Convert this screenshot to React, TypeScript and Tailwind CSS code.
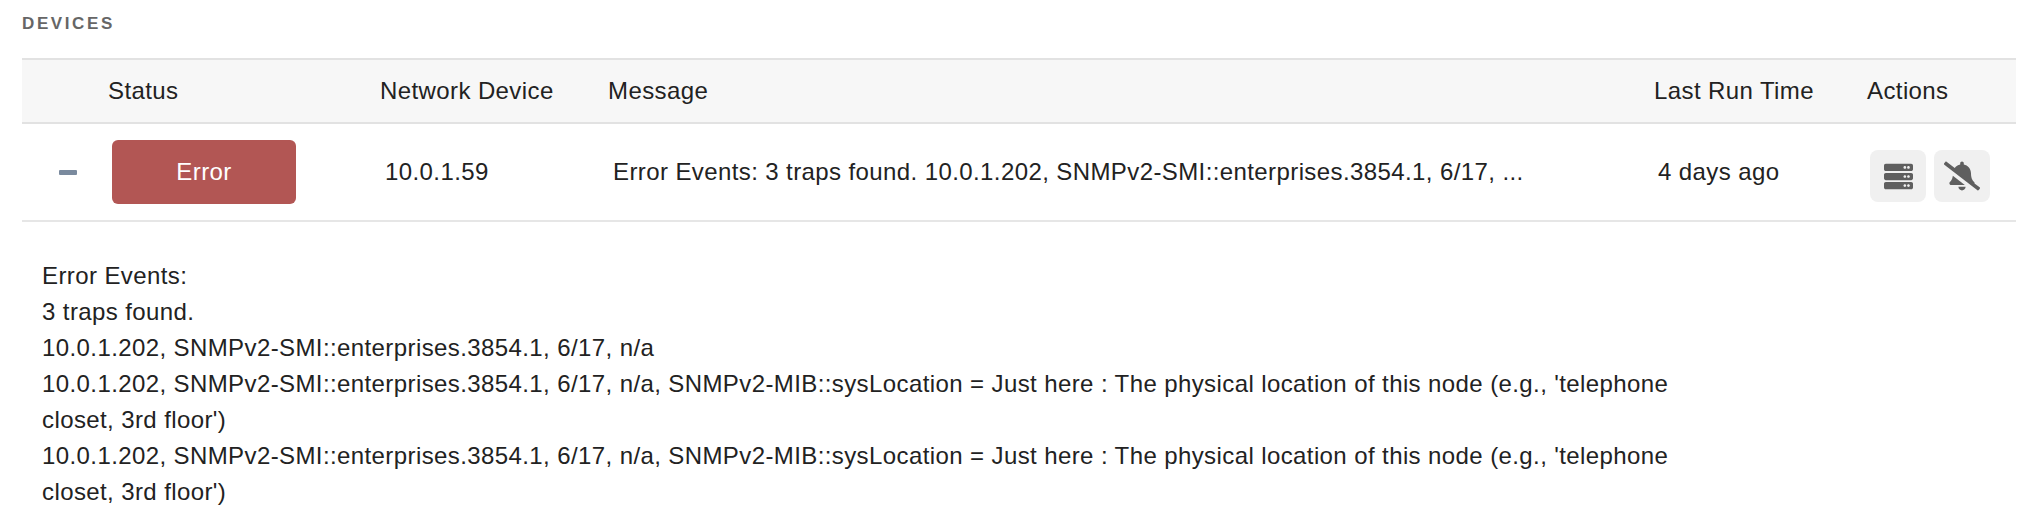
import { FaBellSlash, FaServer } from "react-icons/fa";

const font = "font-['Liberation_Sans',Arial,sans-serif]";

const DETAIL =
  "10.0.1.202, SNMPv2-SMI::enterprises.3854.1, 6/17, n/a, SNMPv2-MIB::sysLocation = Just here : The physical location of this node (e.g., 'telephone closet, 3rd floor')";

export default function App() {
  return (
    <div className={`${font} h-[528px] w-[2034px] bg-white pl-[22px] text-[24px] tracking-[0.4px] text-[#222]`}>
      <h2 className="pt-[16px] text-[17px] leading-[16px] font-bold tracking-[2.6px] text-[#666]">DEVICES</h2>

      {/* Table header */}
      <div className="mt-[26px] flex h-[66px] w-[1994px] items-center border-y-2 border-[#e2e2e2] bg-[#f7f7f7]">
        <div className="w-[86px]" />
        <div className="w-[272px]">Status</div>
        <div className="w-[228px]">Network Device</div>
        <div className="w-[1046px]">Message</div>
        <div className="w-[213px]">Last Run Time</div>
        <div>Actions</div>
      </div>

      {/* Device row */}
      <div className="flex h-[98px] w-[1994px] items-center border-b-2 border-[#e6e6e6]">
        <div className="w-[90px] pl-[37px]">
          <div className="h-[5px] w-[18px] rounded-[1px] bg-[#7a8a9e]" />
        </div>
        <div className="w-[273px]">
          <div className="flex h-[64px] w-[184px] items-center justify-center rounded-[6px] bg-[#b25654] text-white">Error</div>
        </div>
        <div className="w-[228px]">10.0.1.59</div>
        <div className="w-[1045px]">Error Events: 3 traps found. 10.0.1.202, SNMPv2-SMI::enterprises.3854.1, 6/17, ...</div>
        <div className="w-[212px]">4 days ago</div>
        <div className="mt-[8px] flex gap-[8px]">
          <div className="flex h-[52px] w-[56px] items-center justify-center rounded-[8px] bg-[#f0f0f0]">
            <FaServer size={29} color="#5f5f5f" />
          </div>
          <div className="flex h-[52px] w-[56px] items-center justify-center rounded-[8px] bg-[#f0f0f0]">
            <FaBellSlash size={36} color="#5f5f5f" />
          </div>
        </div>
      </div>

      {/* Expanded detail */}
      <div className="w-[1670px] pt-[36px] pl-[20px] leading-[36px]">
        <div>Error Events:</div>
        <div>3 traps found.</div>
        <div>10.0.1.202, SNMPv2-SMI::enterprises.3854.1, 6/17, n/a</div>
        <div>{DETAIL}</div>
        <div>{DETAIL}</div>
      </div>
    </div>
  );
}
